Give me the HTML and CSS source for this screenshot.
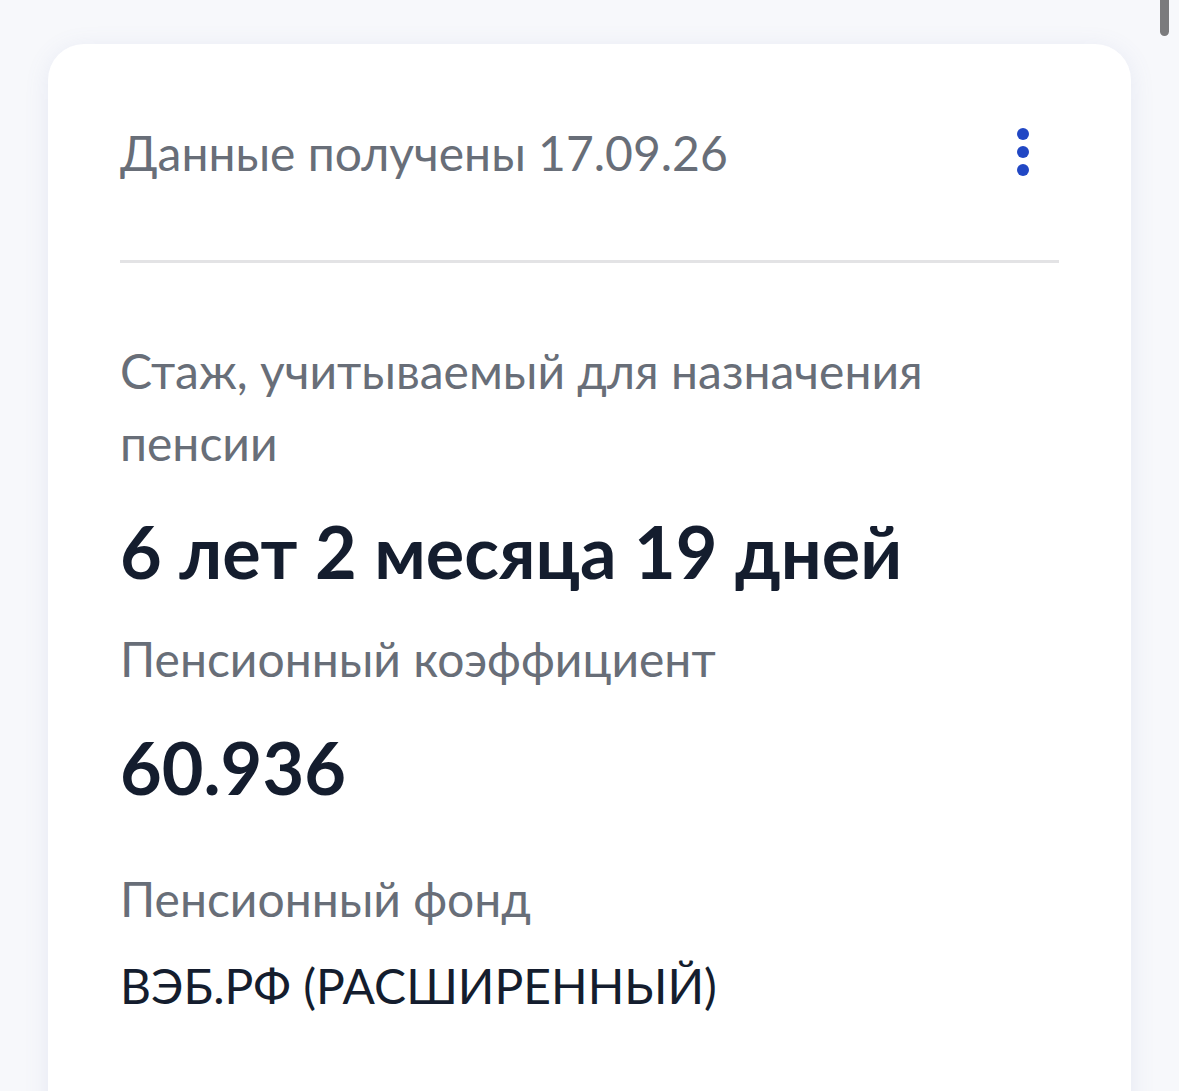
FILE: index.html
```html
<!DOCTYPE html>
<html lang="ru">
<head>
  <meta charset="UTF-8" />
  <meta name="viewport" content="width=device-width, initial-scale=1.0" />
  <title>Пенсионные данные</title>
  <link rel="stylesheet" href="styles.css">
</head>
<body>
  <div class="scrollbar"></div>
  <div class="card">
    <div class="card-head">
      <span class="received">Данные получены 17.09.26</span>
      <button class="menu" aria-label="Меню">
        <span></span><span></span><span></span>
      </button>
    </div>
    <div class="divider"></div>
    <div class="card-body">
      <div class="label">Стаж, учитываемый для назначения пенсии</div>
      <div class="value big">6 лет 2 месяца 19 дней</div>
      <div class="label">Пенсионный коэффициент</div>
      <div class="value big">60.936</div>
      <div class="label fund">Пенсионный фонд</div>
      <div class="value">ВЭБ.РФ (РАСШИРЕННЫЙ)</div>
    </div>
  </div>
</body>
</html>
```

FILE: styles.css
```css
* {
  margin: 0;
  padding: 0;
  box-sizing: border-box;
}
body {
  font-family: Lato, "Noto Sans", sans-serif;
  background: #f7f8fb;
  overflow: hidden;
  height: 1091px;
}
.scrollbar {
  position: absolute;
  top: 0;
  right: 10px;
  width: 9px;
  height: 36px;
  border-radius: 0 0 5px 5px;
  background: #7b7b7d;
}
.card {
  margin: 44px 48px 0;
  height: 1100px;
  padding: 0 72px;
  background: #fff;
  border-radius: 36px;
  box-shadow: 0 4px 24px rgba(110, 125, 190, 0.12);
}
.card-head {
  height: 216px;
  display: flex;
  align-items: center;
  justify-content: space-between;
}
.received {
  font-size: 48px;
  color: #686e78;
}
.menu {
  border: 0;
  background: none;
  display: flex;
  flex-direction: column;
  gap: 6px;
  margin-right: 30px;
}
.menu span {
  width: 12px;
  height: 12px;
  border-radius: 50%;
  background: #2147c4;
}
.divider {
  height: 3px;
  background: #e3e3e5;
}
.card-body {
  padding-top: 72px;
}
.label {
  font-size: 48px;
  line-height: 72px;
  color: #686e78;
}
.value {
  font-size: 48px;
  line-height: 72px;
  color: #141d2e;
  margin-top: 15px;
}
.value.big {
  font-size: 72px;
  font-weight: 700;
  line-height: 86px;
  margin: 29px 0 29px;
}
.fund {
  margin-top: 53px;
}
```
